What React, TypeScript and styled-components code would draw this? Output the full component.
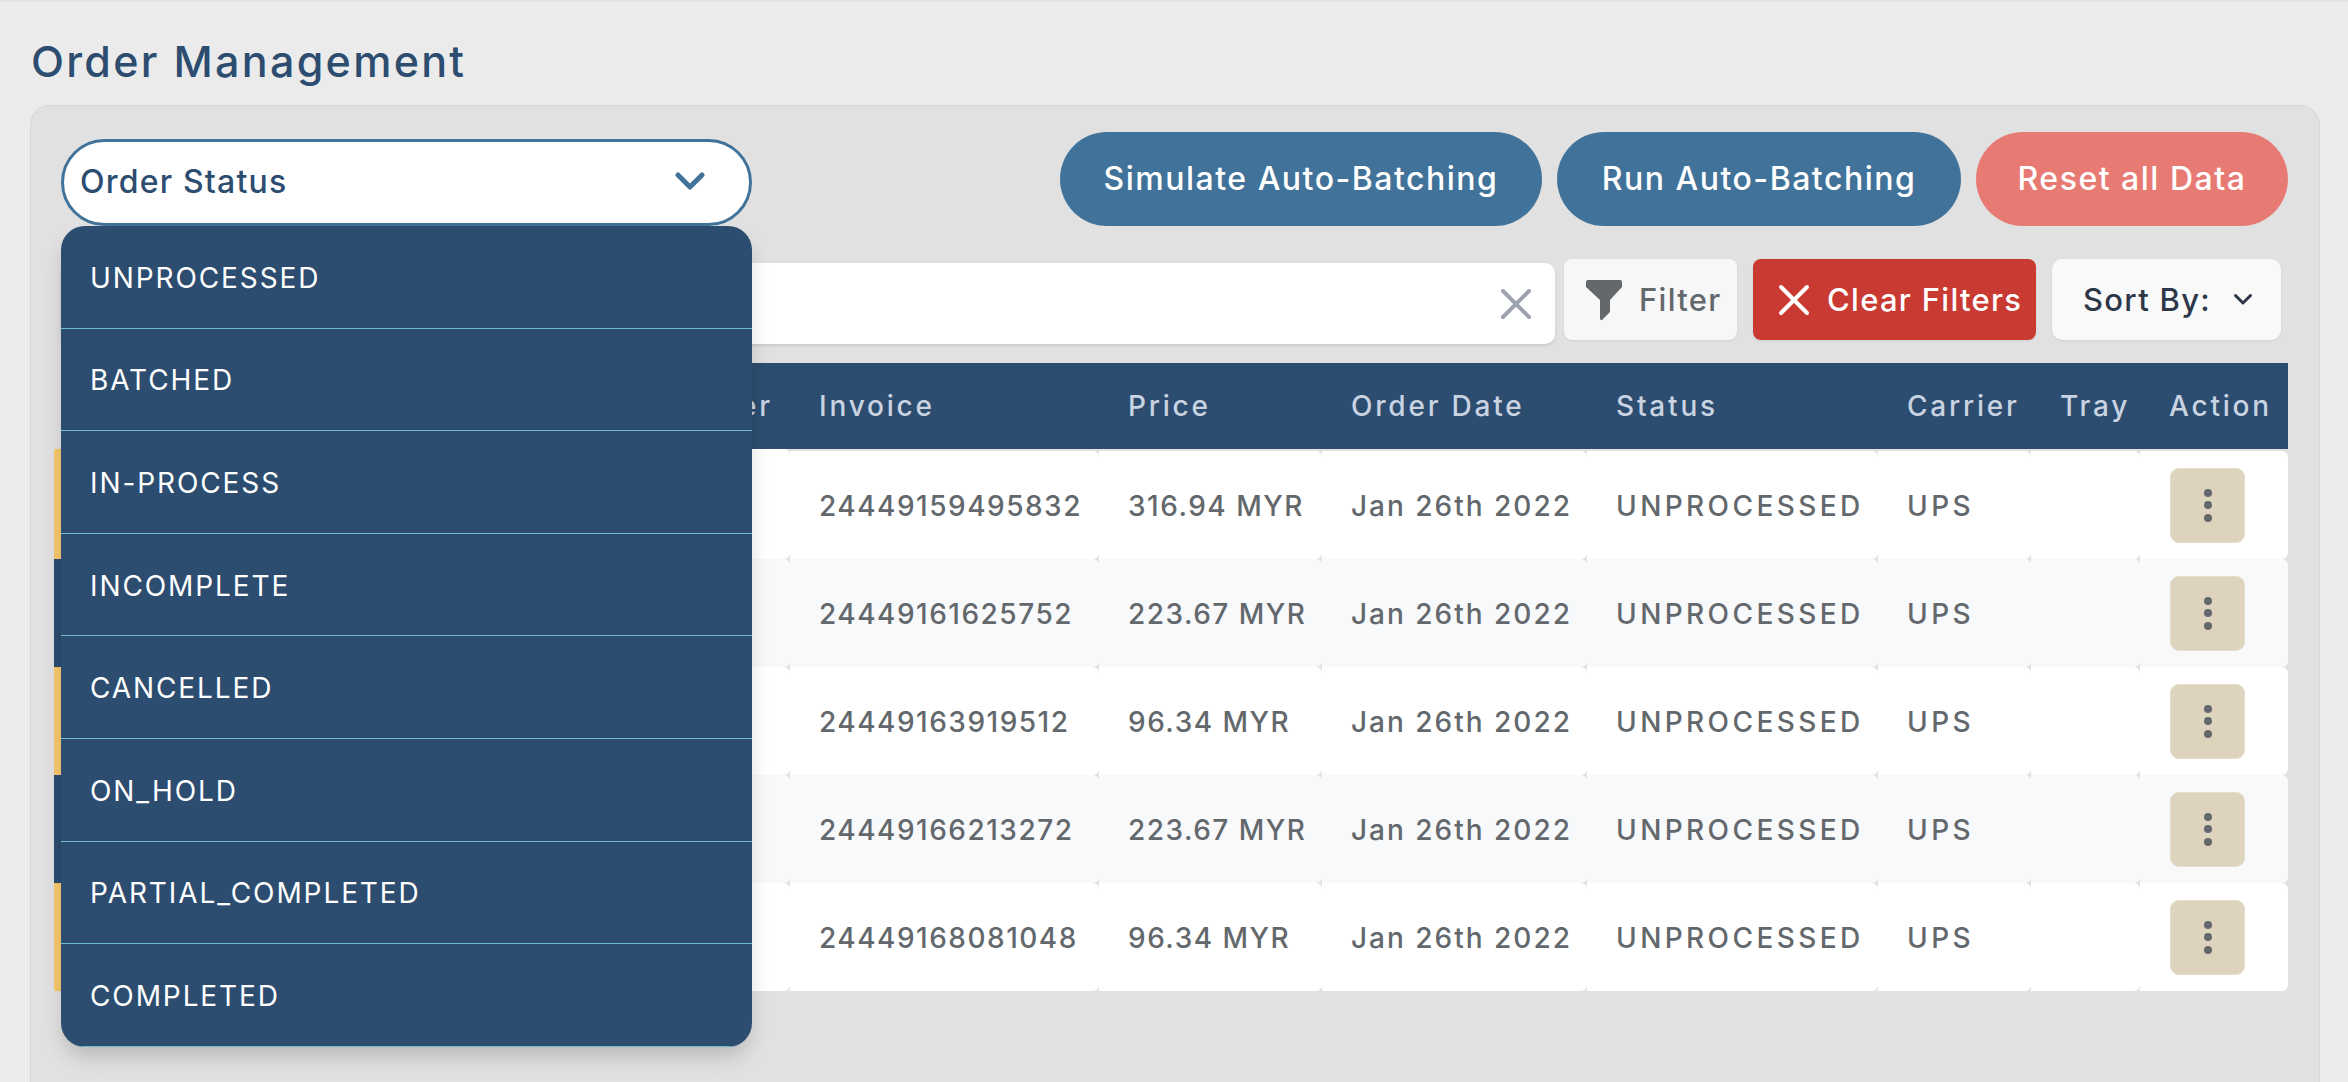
import styled, { createGlobalStyle } from "styled-components"

const GlobalStyle = createGlobalStyle`
  html, body {
    margin: 0;
    height: 100%;
    overflow: hidden;
    background: #ebebeb;
  }
  * { box-sizing: border-box; }
`

const headColumns = "729px 309px 223px 265px 291px 153px 109px 148px"
const rowColumns = "736px 309px 223px 265px 291px 153px 109px 148px"

const orderStatuses = [
  "UNPROCESSED",
  "BATCHED",
  "IN-PROCESS",
  "INCOMPLETE",
  "CANCELLED",
  "ON_HOLD",
  "PARTIAL_COMPLETED",
  "COMPLETED",
]

const orders = [
  { invoice: "24449159495832", price: "316.94 MYR" },
  { invoice: "24449161625752", price: "223.67 MYR" },
  { invoice: "24449163919512", price: "96.34 MYR" },
  { invoice: "24449166213272", price: "223.67 MYR" },
  { invoice: "24449168081048", price: "96.34 MYR" },
]

const Page = styled.div`
  height: 1082px;
  padding: 0 28px 0 30px;
  font-family: Inter, "Liberation Sans", sans-serif;
  border-top: 2px solid #e3e3e3;
  overflow: hidden;
`

const Title = styled.h1`
  margin: 0;
  height: 103px;
  padding: 33px 0 0 1px;
  font-size: 43px;
  line-height: 52px;
  font-weight: 500;
  letter-spacing: 2.3px;
  color: #2c4d70;
`

const Panel = styled.section`
  height: 1000px;
  padding: 26px 31px 0 23px;
  background: #e1e1e1;
  border: 1px solid #d6d6d6;
  border-radius: 20px 20px 0 0;
`

const TopBar = styled.div`
  display: flex;
  justify-content: space-between;
  height: 94px;
  padding-left: 7px;
`

const SelectWrap = styled.div`
  position: relative;
  width: 691px;
  margin-top: 7px;
  z-index: 2;
`

const SelectBox = styled.div`
  display: flex;
  align-items: center;
  justify-content: space-between;
  height: 87px;
  padding: 0 44px 3px 16px;
  background: #fff;
  border: 3px solid #41739a;
  border-radius: 44px;
  font-size: 32px;
  font-weight: 500;
  letter-spacing: 1.2px;
  color: #2c4d70;
`

const Menu = styled.ul`
  position: absolute;
  top: 87px;
  left: 0;
  width: 100%;
  margin: 0;
  padding: 0;
  list-style: none;
  background: #2c4d70;
  border-radius: 24px;
  overflow: hidden;
  box-shadow: 0 12px 22px -4px rgba(0, 0, 0, 0.2);
`

const MenuItem = styled.li`
  display: flex;
  align-items: center;
  height: 102.6px;
  padding: 2px 0 0 29px;
  border-bottom: 1px solid #6fbccb;
  font-size: 28px;
  letter-spacing: 1.9px;
  color: #fff;
`

const Actions = styled.div`
  display: flex;
  gap: 15px;
`

const PillButton = styled.button<{ $danger?: boolean; $width: number }>`
  width: ${({ $width }) => $width}px;
  height: 94px;
  padding: 0 0 2px;
  border: 0;
  border-radius: 47px;
  background: ${({ $danger }) => ($danger ? "#e87a74" : "#41739a")};
  font-family: inherit;
  font-size: 32px;
  font-weight: 500;
  letter-spacing: 1.5px;
  color: #fff;
`

const FilterBar = styled.div`
  display: flex;
  align-items: flex-start;
  height: 104px;
  margin-top: 33px;
  padding-left: 7px;
`

const SearchField = styled.div`
  display: flex;
  align-items: center;
  justify-content: flex-end;
  width: 1494px;
  height: 81px;
  margin-top: 4px;
  padding-right: 23px;
  background: #fff;
  border-radius: 10px;
  box-shadow: 0 2px 3px rgba(0, 0, 0, 0.1);
`

const ToolButton = styled.button<{ $variant: "filter" | "clear" | "sort"; $width: number }>`
  display: flex;
  align-items: center;
  gap: ${({ $variant }) => ($variant === "sort" ? "22px" : "17px")};
  width: ${({ $width }) => $width}px;
  height: 81px;
  margin-left: ${({ $variant }) => ($variant === "filter" ? "9px" : "16px")};
  padding: 0 0 0
    ${({ $variant }) => ($variant === "clear" ? "25px" : $variant === "sort" ? "31px" : "22px")};
  border: 0;
  border-radius: ${({ $variant }) => ($variant === "sort" ? "10px" : "8px")};
  background: ${({ $variant }) =>
    $variant === "clear" ? "#c93a32" : $variant === "sort" ? "#f9f9fa" : "#f7f7f7"};
  box-shadow: 0 1px 2px rgba(0, 0, 0, 0.08);
  font-family: inherit;
  font-size: 31px;
  font-weight: 500;
  letter-spacing: 1.3px;
  white-space: nowrap;
  color: ${({ $variant }) =>
    $variant === "clear" ? "#fff" : $variant === "sort" ? "#2d3748" : "#63686d"};
`

const Table = styled.div`
  width: 2234px;
`

const HeadRow = styled.div`
  display: grid;
  grid-template-columns: ${headColumns};
  height: 86px;
  margin: 0 0 2px 7px;
  align-items: center;
  background: #2c4d70;
  font-size: 28px;
  font-weight: 500;
  letter-spacing: 2.8px;
  color: #c9d3e1;
`

const HeadCell = styled.div<{ $end?: boolean }>`
  padding: ${({ $end }) => ($end ? "0 17px 0 0" : "0 0 0 29px")};
  text-align: ${({ $end }) => ($end ? "right" : "left")};
  white-space: nowrap;
`

const Row = styled.div<{ $stripe: boolean }>`
  display: grid;
  grid-template-columns: ${rowColumns};
  height: 108px;
  --row-bg: ${({ $stripe }) => ($stripe ? "#f8f9fb" : "#fff")};

  ${HeadRow} + & > :first-child {
    margin-top: -2px;
  }
`

const Cell = styled.div<{ $lead?: boolean; $stripe?: boolean; $tracking?: number }>`
  display: flex;
  align-items: center;
  padding: 2px 0 0 29px;
  background: var(--row-bg);
  border-radius: 0 6px 6px 0;
  ${({ $lead, $stripe }) =>
    $lead ? `border-left: 7px solid ${$stripe ? "#2c4d70" : "#f8c96c"};` : ""}
  font-size: 28px;
  font-weight: 500;
  letter-spacing: ${({ $tracking = 1.5 }) => $tracking}px;
  color: #63686d;
  white-space: nowrap;
`

const KebabButton = styled.button`
  display: flex;
  flex-direction: column;
  align-items: center;
  justify-content: center;
  gap: 4.5px;
  width: 75px;
  height: 75px;
  margin: -2px 0 0 1px;
  padding: 0;
  border: 1px solid #e4ddcd;
  border-radius: 9px;
  background: #ded3bc;
`

const Dot = styled.span`
  width: 8px;
  height: 8px;
  border-radius: 50%;
  background: #63686d;
`

const Icon = styled.svg`
  flex: none;
`

const App = () => (
  <Page>
    <GlobalStyle />
    <Title>Order Management</Title>
    <Panel>
      <TopBar>
        <SelectWrap>
          <SelectBox>
            Order Status
            <Icon width="30" height="20" viewBox="0 0 30 20" fill="none">
              <path d="M3 4l12 12L27 4" stroke="#41739a" strokeWidth="5" strokeLinecap="round" strokeLinejoin="round" />
            </Icon>
          </SelectBox>
          <Menu>
            {orderStatuses.map(status => (
              <MenuItem key={status}>{status}</MenuItem>
            ))}
          </Menu>
        </SelectWrap>
        <Actions>
          <PillButton $width={482}>Simulate Auto-Batching</PillButton>
          <PillButton $width={404}>Run Auto-Batching</PillButton>
          <PillButton $width={312} $danger>
            Reset all Data
          </PillButton>
        </Actions>
      </TopBar>
      <FilterBar>
        <SearchField>
          <Icon width="32" height="32" viewBox="0 0 32 32" fill="none">
            <path d="M3 3l26 26M29 3L3 29" stroke="#9ca3af" strokeWidth="4" strokeLinecap="round" />
          </Icon>
        </SearchField>
        <ToolButton $variant="filter" $width={173}>
          <Icon width="36" height="42" viewBox="0 0 36 42" fill="#63686d">
            <path d="M0 3a2 2 0 012-2h32a2 2 0 012 2v5L24 21v12l-7 7a1.500 1.500 0 01-3-1V21L0 8z" />
          </Icon>
          Filter
        </ToolButton>
        <ToolButton $variant="clear" $width={283}>
          <Icon width="32" height="32" viewBox="0 0 32 32" fill="none">
            <path d="M3 3l26 26M29 3L3 29" stroke="#fff" strokeWidth="4" strokeLinecap="round" />
          </Icon>
          Clear Filters
        </ToolButton>
        <ToolButton $variant="sort" $width={229}>
          Sort By:
          <Icon width="20" height="13" viewBox="0 0 20 13" fill="none">
            <path d="M2.500 2.500L10 10l7.500-7.500" stroke="#2d3748" strokeWidth="3" strokeLinecap="round" strokeLinejoin="round" />
          </Icon>
        </ToolButton>
      </FilterBar>
      <Table>
        <HeadRow>
          <HeadCell $end>Customer</HeadCell>
          <HeadCell>Invoice</HeadCell>
          <HeadCell>Price</HeadCell>
          <HeadCell>Order Date</HeadCell>
          <HeadCell>Status</HeadCell>
          <HeadCell>Carrier</HeadCell>
          <HeadCell>Tray</HeadCell>
          <HeadCell>Action</HeadCell>
        </HeadRow>
        {orders.map((order, index) => {
          const stripe = index % 2 === 1
          return (
            <Row key={order.invoice} $stripe={stripe}>
              <Cell $lead $stripe={stripe} />
              <Cell>{order.invoice}</Cell>
              <Cell>{order.price}</Cell>
              <Cell $tracking={2}>Jan 26th 2022</Cell>
              <Cell $tracking={3.4}>UNPROCESSED</Cell>
              <Cell $tracking={3.4}>UPS</Cell>
              <Cell />
              <Cell>
                <KebabButton>
                  <Dot />
                  <Dot />
                  <Dot />
                </KebabButton>
              </Cell>
            </Row>
          )
        })}
      </Table>
    </Panel>
  </Page>
)

export default App
